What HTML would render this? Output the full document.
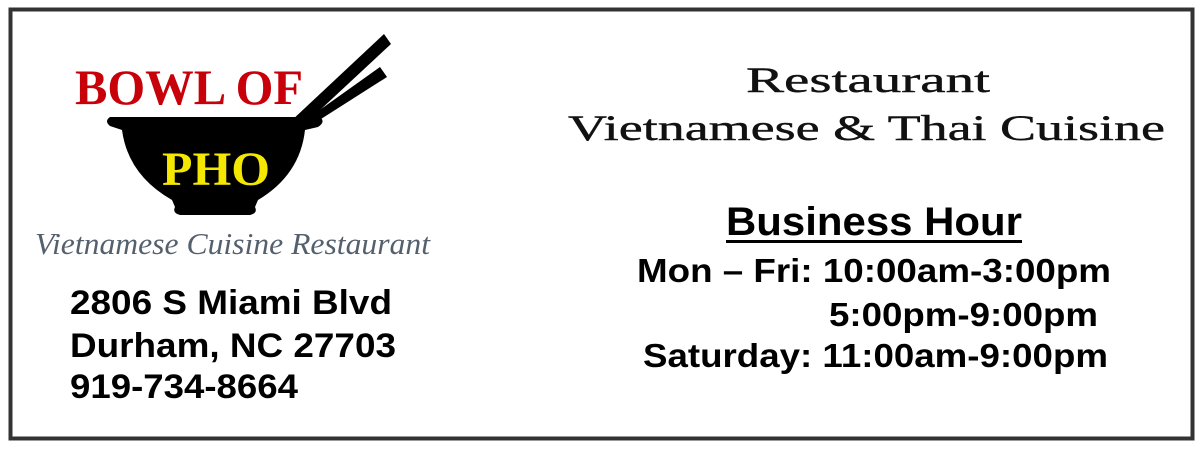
<!DOCTYPE html>
<html><head><meta charset="utf-8"><style>
html,body{margin:0;padding:0;background:#fff;width:1200px;height:450px;overflow:hidden}
</style></head><body>
<svg width="1200" height="450" viewBox="0 0 1200 450" xmlns="http://www.w3.org/2000/svg">
<rect x="0" y="0" width="1200" height="450" fill="#fff"/>
<rect x="10.5" y="9.5" width="1182" height="429" fill="none" stroke="#333" stroke-width="4"/>
<path d="M290 122 L384 34 L391 44 L305 124 Z" fill="#000"/>
<path d="M300 124 L380 67 L387 77 L310 126 Z" fill="#000"/>
<path d="M110 117 L320 117 Q326 122 318 127 L305 130 Q300 175 258 200 L255 207 Q258 213 250 215 L180 215 Q172 213 175 207 L172 200 Q128 175 122 130 L110 126 Q104 121 110 117 Z" fill="#000"/>
<text x="75" y="104" font-family="Liberation Serif, serif" font-weight="bold" font-size="50" fill="#c8000a" textLength="228" lengthAdjust="spacingAndGlyphs">BOWL OF</text>
<text x="162" y="185" font-family="Liberation Serif, serif" font-weight="bold" font-size="48" fill="#f5e800" textLength="108" lengthAdjust="spacingAndGlyphs">PHO</text>
<text x="35" y="254" font-family="Liberation Serif, serif" font-style="italic" font-size="31" fill="#55606e" textLength="395" lengthAdjust="spacingAndGlyphs">Vietnamese Cuisine Restaurant</text>
<g font-family="Liberation Sans, sans-serif" font-weight="bold" font-size="34" fill="#000">
<text x="70" y="314" textLength="322" lengthAdjust="spacingAndGlyphs">2806 S Miami Blvd</text>
<text x="70" y="357" textLength="326" lengthAdjust="spacingAndGlyphs">Durham, NC 27703</text>
<text x="70" y="398" textLength="228" lengthAdjust="spacingAndGlyphs">919-734-8664</text>
</g>
<g font-family="Liberation Serif, serif" font-size="36" fill="#111" stroke="#111" stroke-width="0.4">
<text x="746" y="92" textLength="244" lengthAdjust="spacingAndGlyphs">Restaurant</text>
<text x="568" y="140" textLength="597" lengthAdjust="spacingAndGlyphs">Vietnamese &amp; Thai Cuisine</text>
</g>
<text x="726" y="235" font-family="Liberation Sans, sans-serif" font-weight="bold" font-size="40" fill="#000" textLength="296" lengthAdjust="spacingAndGlyphs">Business Hour</text>
<rect x="726" y="240" width="296" height="3" fill="#000"/>
<g font-family="Liberation Sans, sans-serif" font-weight="bold" font-size="33" fill="#000">
<text x="637" y="282" textLength="474" lengthAdjust="spacingAndGlyphs">Mon – Fri: 10:00am-3:00pm</text>
<text x="829" y="326" textLength="269" lengthAdjust="spacingAndGlyphs">5:00pm-9:00pm</text>
<text x="643" y="367" textLength="465" lengthAdjust="spacingAndGlyphs">Saturday: 11:00am-9:00pm</text>
</g>
</svg>
</body></html>
